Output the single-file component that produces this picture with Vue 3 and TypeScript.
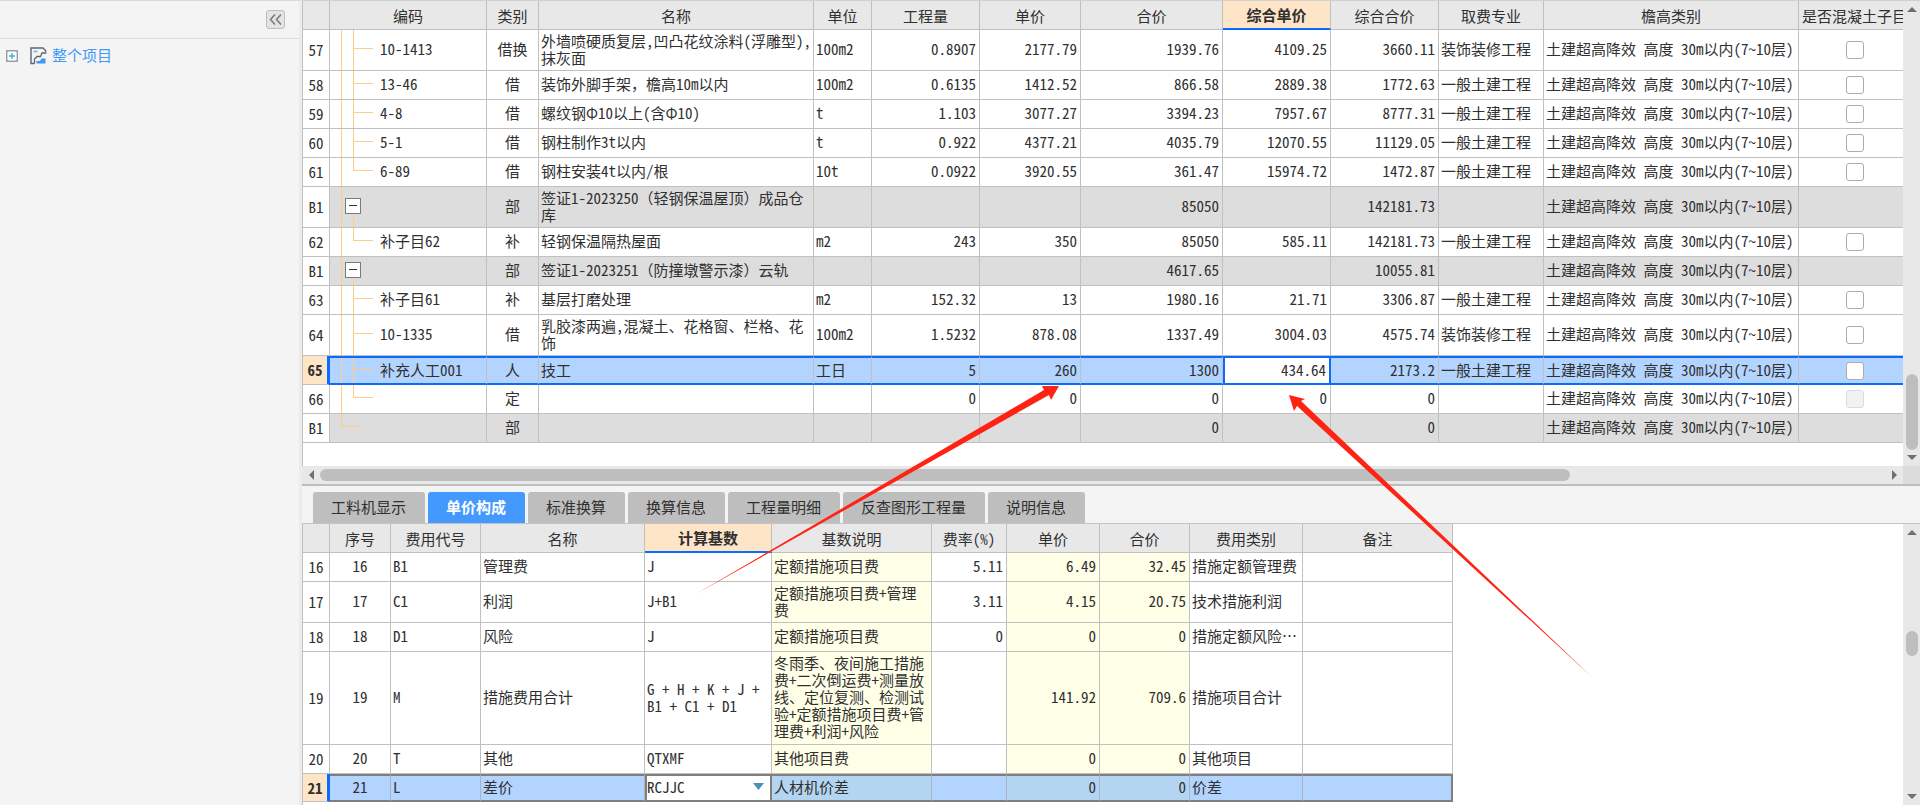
<script setup lang="ts">
interface WorkRow {
  no: string
  code: string
  tree: 'mid' | 'last' | 'open' | 'end'
  kind: string
  name: string
  unit: string
  qty: string
  price: string
  total: string
  fullPrice: string
  fullTotal: string
  trade: string
  check: 'on' | 'off' | 'none'
  group?: boolean
  tall?: boolean
  selected?: boolean
}

interface FeeRow {
  no: string
  code: string
  name: string
  base: string
  note: string
  rate: string
  price: string
  total: string
  kind: string
  size?: 'tall' | 'huge' | 'short'
  selected?: boolean
}

const height = '土建超高降效 高度 30m以内(7~10层)'
const general = '一般土建工程'
const decor = '装饰装修工程'

const workColumns = [
  { w: 27, t: '' },
  { w: 157, t: '编码' },
  { w: 52, t: '类别' },
  { w: 275, t: '名称' },
  { w: 58, t: '单位' },
  { w: 108, t: '工程量' },
  { w: 101, t: '单价' },
  { w: 142, t: '合价' },
  { w: 108, t: '综合单价', active: true },
  { w: 108, t: '综合合价' },
  { w: 105, t: '取费专业' },
  { w: 255, t: '檐高类别' },
  { w: 112, t: '是否混凝土子目' }
]

const workRows: WorkRow[] = [
  { no: '57', code: '10-1413', tree: 'mid', kind: '借换', name: '外墙喷硬质复层,凹凸花纹涂料(浮雕型),\n抹灰面', unit: '100m2', qty: '0.8907', price: '2177.79', total: '1939.76', fullPrice: '4109.25', fullTotal: '3660.11', trade: decor, check: 'on', tall: true },
  { no: '58', code: '13-46', tree: 'mid', kind: '借', name: '装饰外脚手架，檐高10m以内', unit: '100m2', qty: '0.6135', price: '1412.52', total: '866.58', fullPrice: '2889.38', fullTotal: '1772.63', trade: general, check: 'on' },
  { no: '59', code: '4-8', tree: 'mid', kind: '借', name: '螺纹钢Φ10以上(含Φ10)', unit: 't', qty: '1.103', price: '3077.27', total: '3394.23', fullPrice: '7957.67', fullTotal: '8777.31', trade: general, check: 'on' },
  { no: '60', code: '5-1', tree: 'mid', kind: '借', name: '钢柱制作3t以内', unit: 't', qty: '0.922', price: '4377.21', total: '4035.79', fullPrice: '12070.55', fullTotal: '11129.05', trade: general, check: 'on' },
  { no: '61', code: '6-89', tree: 'last', kind: '借', name: '钢柱安装4t以内/根', unit: '10t', qty: '0.0922', price: '3920.55', total: '361.47', fullPrice: '15974.72', fullTotal: '1472.87', trade: general, check: 'on' },
  { no: 'B1', code: '', tree: 'open', kind: '部', name: '签证1-2023250（轻钢保温屋顶）成品仓\n库', unit: '', qty: '', price: '', total: '85050', fullPrice: '', fullTotal: '142181.73', trade: '', check: 'none', group: true, tall: true },
  { no: '62', code: '补子目62', tree: 'last', kind: '补', name: '轻钢保温隔热屋面', unit: 'm2', qty: '243', price: '350', total: '85050', fullPrice: '585.11', fullTotal: '142181.73', trade: general, check: 'on' },
  { no: 'B1', code: '', tree: 'open', kind: '部', name: '签证1-2023251（防撞墩警示漆）云轨', unit: '', qty: '', price: '', total: '4617.65', fullPrice: '', fullTotal: '10055.81', trade: '', check: 'none', group: true },
  { no: '63', code: '补子目61', tree: 'mid', kind: '补', name: '基层打磨处理', unit: 'm2', qty: '152.32', price: '13', total: '1980.16', fullPrice: '21.71', fullTotal: '3306.87', trade: general, check: 'on' },
  { no: '64', code: '10-1335', tree: 'mid', kind: '借', name: '乳胶漆两遍,混凝土、花格窗、栏格、花\n饰', unit: '100m2', qty: '1.5232', price: '878.08', total: '1337.49', fullPrice: '3004.03', fullTotal: '4575.74', trade: decor, check: 'on', tall: true },
  { no: '65', code: '补充人工001', tree: 'mid', kind: '人', name: '技工', unit: '工日', qty: '5', price: '260', total: '1300', fullPrice: '434.64', fullTotal: '2173.2', trade: general, check: 'on', selected: true },
  { no: '66', code: '', tree: 'last', kind: '定', name: '', unit: '', qty: '0', price: '0', total: '0', fullPrice: '0', fullTotal: '0', trade: '', check: 'off' },
  { no: 'B1', code: '', tree: 'end', kind: '部', name: '', unit: '', qty: '', price: '', total: '0', fullPrice: '', fullTotal: '0', trade: '', check: 'none', group: true }
]

const tabs = ['工料机显示', '单价构成', '标准换算', '换算信息', '工程量明细', '反查图形工程量', '说明信息']
const activeTab = '单价构成'

const feeColumns = [
  { w: 27, t: '' },
  { w: 61, t: '序号' },
  { w: 90, t: '费用代号' },
  { w: 164, t: '名称' },
  { w: 127, t: '计算基数', active: true },
  { w: 160, t: '基数说明' },
  { w: 75, t: '费率(%)' },
  { w: 93, t: '单价' },
  { w: 90, t: '合价' },
  { w: 113, t: '费用类别' },
  { w: 150, t: '备注' }
]

const feeRows: FeeRow[] = [
  { no: '16', code: 'B1', name: '管理费', base: 'J', note: '定额措施项目费', rate: '5.11', price: '6.49', total: '32.45', kind: '措施定额管理费' },
  { no: '17', code: 'C1', name: '利润', base: 'J+B1', note: '定额措施项目费+管理\n费', rate: '3.11', price: '4.15', total: '20.75', kind: '技术措施利润', size: 'tall' },
  { no: '18', code: 'D1', name: '风险', base: 'J', note: '定额措施项目费', rate: '0', price: '0', total: '0', kind: '措施定额风险…' },
  { no: '19', code: 'M', name: '措施费用合计', base: 'G + H + K + J +\nB1 + C1 + D1', note: '冬雨季、夜间施工措施\n费+二次倒运费+测量放\n线、定位复测、检测试\n验+定额措施项目费+管\n理费+利润+风险', rate: '', price: '141.92', total: '709.6', kind: '措施项目合计', size: 'huge' },
  { no: '20', code: 'T', name: '其他', base: 'QTXMF', note: '其他项目费', rate: '', price: '0', total: '0', kind: '其他项目' },
  { no: '21', code: 'L', name: '差价', base: 'RCJJC', note: '人材机价差', rate: '', price: '0', total: '0', kind: '价差', size: 'short', selected: true }
]

const sum = (cols: { w: number }[]) => cols.reduce((a, c) => a + c.w, 0)
const workWidth = sum(workColumns) + 'px'
const feeWidth = sum(feeColumns) + 'px'

const scroll = {
  work: [359, 76, 3],
  side: [2, 1251, 318],
  fee: [94, 25, 136]
}
</script>

<template>
  <div class="app">
    <aside class="sidebar">
      <div class="side-head">
        <button class="collapse" aria-label="收起">
          <svg width="13" height="11" viewBox="0 0 13 11"><path d="M6 .5 1.500 5.500 6 10.500M12 .5 7.500 5.500 12 10.500" fill="none" stroke="#7c7c7c" stroke-width="1.600" /></svg>
        </button>
      </div>
      <a class="project" href="#">
        <svg class="plus" width="12" height="12" viewBox="0 0 12 12"><rect x=".75" y=".75" width="10.500" height="10.500" fill="#fff" stroke="#8d9499" stroke-width="1.300" /><path d="M3 6h6M6 3v6" stroke="#3fb3e0" stroke-width="1.400" /></svg>
        <svg class="doc" width="17" height="18" viewBox="0 0 17 18">
          <path d="M4.500 16.500H1V1h12l2.500 2.500V5" fill="none" stroke="#5d6670" stroke-width="1.400" />
          <path d="M3.500 4.500h4" stroke="#6fb3f5" stroke-width="1.600" />
          <path d="M16.500 6H12L10.500 9.500H7L4.500 12v4.500" fill="none" stroke="#5d6670" stroke-width="1.300" />
          <path d="M6.500 16.500v-2.500H10l1.500-2.500h4v5z" fill="#3f97fa" />
        </svg>
        <span>整个项目</span>
      </a>
    </aside>

    <main class="main">
      <section class="pane">
        <div class="pane-row">
          <div class="view work-view">
            <table class="grid" :style="{ width: workWidth }">
              <colgroup><col v-for="(c, i) in workColumns" :key="i" :style="{ width: c.w + 'px' }" /></colgroup>
              <thead>
                <tr><th v-for="(c, i) in workColumns" :key="i" :class="{ active: c.active }">{{ c.t }}</th></tr>
              </thead>
              <tbody>
                <tr v-for="(r, i) in workRows" :key="i" :class="{ group: r.group, tall: r.tall, selected: r.selected }">
                  <th scope="row" class="no">{{ r.no }}</th>
                  <td class="code" :class="r.tree">
                    <button v-if="r.tree === 'open'" class="fold" aria-label="折叠"></button>
                    <template v-else>{{ r.code }}</template>
                  </td>
                  <td class="mid-text">{{ r.kind }}</td>
                  <td class="text">{{ r.name }}</td>
                  <td class="text">{{ r.unit }}</td>
                  <td class="num">{{ r.qty }}</td>
                  <td class="num">{{ r.price }}</td>
                  <td class="num">{{ r.total }}</td>
                  <td class="num" :class="{ current: r.selected }">{{ r.fullPrice }}</td>
                  <td class="num">{{ r.fullTotal }}</td>
                  <td class="text">{{ r.trade }}</td>
                  <td class="text">{{ height }}</td>
                  <td class="tick"><input v-if="r.check !== 'none'" type="checkbox" :disabled="r.check === 'off'" aria-label="是否混凝土子目" /></td>
                </tr>
              </tbody>
            </table>
          </div>
          <div class="vbar">
            <svg width="10" height="5" viewBox="0 0 10 5"><path d="M0 5 5 0l5 5z" fill="#6f6f76" /></svg>
            <div class="track">
              <i :style="{ flexGrow: scroll.work[0] }"></i><b :style="{ flexGrow: scroll.work[1] }"></b><i :style="{ flexGrow: scroll.work[2] }"></i>
            </div>
            <svg width="10" height="5" viewBox="0 0 10 5"><path d="M0 0h10L5 5z" fill="#6f6f76" /></svg>
          </div>
        </div>
        <div class="hbar-row">
          <div class="hbar">
            <svg width="5" height="10" viewBox="0 0 5 10"><path d="M5 0v10L0 5z" fill="#6f6f76" /></svg>
            <div class="track">
              <i :style="{ flexGrow: scroll.side[0] }"></i><b :style="{ flexGrow: scroll.side[1] }"></b><i :style="{ flexGrow: scroll.side[2] }"></i>
            </div>
            <svg width="5" height="10" viewBox="0 0 5 10"><path d="M0 0v10l5-5z" fill="#6f6f76" /></svg>
          </div>
          <div class="corner"></div>
        </div>
      </section>

      <nav class="tabs" role="tablist">
        <button v-for="t in tabs" :key="t" role="tab" class="tab" :class="{ on: t === activeTab }" :aria-selected="t === activeTab">{{ t }}</button>
      </nav>

      <section class="pane-row fee">
        <div class="view">
          <table class="grid" :style="{ width: feeWidth }">
            <colgroup><col v-for="(c, i) in feeColumns" :key="i" :style="{ width: c.w + 'px' }" /></colgroup>
            <thead>
              <tr><th v-for="(c, i) in feeColumns" :key="i" :class="{ active: c.active }">{{ c.t }}</th></tr>
            </thead>
            <tbody>
              <tr v-for="r in feeRows" :key="r.no" :class="[r.size, { selected: r.selected }]">
                <th scope="row" class="no">{{ r.no }}</th>
                <td class="mid-text">{{ r.no }}</td>
                <td class="text">{{ r.code }}</td>
                <td class="text">{{ r.name }}</td>
                <td class="text" :class="{ current: r.selected }">
                  <div v-if="r.selected" class="combo">
                    <select aria-label="计算基数"><option>{{ r.base }}</option></select>
                    <svg width="11" height="7" viewBox="0 0 11 7"><path d="M0 0h11L5.500 7z" fill="#4a90bd" /></svg>
                  </div>
                  <template v-else>{{ r.base }}</template>
                </td>
                <td class="text soft">{{ r.note }}</td>
                <td class="num">{{ r.rate }}</td>
                <td class="num soft">{{ r.price }}</td>
                <td class="num soft">{{ r.total }}</td>
                <td class="text">{{ r.kind }}</td>
                <td></td>
              </tr>
            </tbody>
          </table>
        </div>
        <div class="vbar">
          <svg width="10" height="5" viewBox="0 0 10 5"><path d="M0 5 5 0l5 5z" fill="#6f6f76" /></svg>
          <div class="track">
            <i :style="{ flexGrow: scroll.fee[0] }"></i><b :style="{ flexGrow: scroll.fee[1] }"></b><i :style="{ flexGrow: scroll.fee[2] }"></i>
          </div>
          <svg width="10" height="5" viewBox="0 0 10 5"><path d="M0 0h10L5 5z" fill="#6f6f76" /></svg>
        </div>
      </section>
    </main>

    <svg class="marks" width="1920" height="805" viewBox="0 0 1920 805" aria-hidden="true">
      <path d="M696 594 1044 390l-2-4h17l-8 14-2-5z" fill="#ff2314" />
      <path d="M1593 678 1297 406l-3 5-5-16 16 4-4 2z" fill="#ff2314" />
    </svg>
  </div>
</template>

<style>
body {
  margin: 0;
  background: #f4f4f4;
}
</style>

<style scoped>
.app {
  position: relative;
  display: flex;
  min-height: 100vh;
  overflow: hidden;
  color: #303030;
  font: 15px/17px "Noto Sans Mono CJK SC", "Noto Sans CJK SC", sans-serif;
}
.app * {
  box-sizing: border-box;
}
.sidebar {
  flex: none;
  width: 302px;
  background: #f4f4f4;
  border-top: 1px solid #d8dada;
  border-right: 3px solid #ececec;
}
.side-head {
  display: flex;
  justify-content: flex-end;
  padding: 9px 14px;
  border-bottom: 1px solid #dedede;
}
.collapse {
  display: flex;
  align-items: center;
  justify-content: center;
  width: 19px;
  height: 19px;
  padding: 0;
  background: #e4e4e4;
  border: 1px solid #bdbdbd;
  border-radius: 3px;
}
.project {
  display: flex;
  align-items: center;
  padding: 7px 6px;
  color: #4397f7;
  text-decoration: none;
}
.project span {
  padding-bottom: 2px;
}
.doc {
  margin: 0 5px 0 12px;
}
.main {
  flex: 1;
  min-width: 0;
  display: flex;
  flex-direction: column;
  border-top: 1px solid #d0d0d0;
  background: #fff;
}
.pane-row {
  display: flex;
}
.fee {
  flex: 1;
}
.view {
  flex: 1;
  min-width: 0;
  overflow: hidden;
  border-left: 1px solid #c0c0c0;
}
.work-view {
  padding-bottom: 23px;
}
.grid {
  table-layout: fixed;
  border-collapse: separate;
  border-spacing: 0;
}
.grid th,
.grid td {
  height: 29px;
  padding: 0 0 3px;
  border-right: 1px solid #c0c0c0;
  border-bottom: 1px solid #c0c0c0;
  font-weight: 400;
  white-space: pre;
  overflow: hidden;
}
.grid thead th {
  padding: 0;
  background: #e8e8e8;
  text-align: center;
}
.grid thead th.active {
  background: #ffe5c8;
  border-bottom: 2px solid #0a6cff;
  font-weight: 700;
}
.grid .tall > * {
  height: 41px;
}
.grid .huge > * {
  height: 93px;
}
.grid .short > * {
  height: 28px;
}
.grid .no {
  padding-bottom: 1px;
  background: #fff;
  text-align: center;
}
.grid .text {
  padding-left: 2px;
}
.grid .num {
  padding-right: 3px;
  text-align: right;
}
.mid-text,
.grid .tick {
  text-align: center;
}
.grid .tick {
  padding-bottom: 0;
}
.group td {
  background-color: #ddd;
}
.grid .soft {
  background: #ffffe8;
}
.grid .code {
  padding-left: 50px;
  background-repeat: no-repeat;
  --l: linear-gradient(#ffcd8a, #ffcd8a);
}
.code.mid {
  background-image: var(--l), var(--l), var(--l);
  background-position: 11px 0, 23px 0, 23px 45%;
  background-size: 1px 100%, 1px 100%, 20px 1px;
}
.code.last {
  background-image: var(--l), var(--l), var(--l);
  background-position: 11px 0, 23px 0, 23px 45%;
  background-size: 1px 100%, 1px 45%, 20px 1px;
}
.grid .code.open {
  padding-left: 15px;
  background-image: var(--l), var(--l), var(--l);
  background-position: 11px 0, 23px 100%, 11px 45%;
  background-size: 1px 100%, 1px 50%, 5px 1px;
}
.code.end {
  background-image: var(--l), var(--l);
  background-position: 11px 0, 11px 45%;
  background-size: 1px 45%, 20px 1px;
}
.fold {
  display: flex;
  align-items: center;
  justify-content: center;
  width: 16px;
  height: 16px;
  padding: 0;
  background: #fff;
  border: 1px solid #7a7a7a;
}
.fold::before {
  content: "";
  width: 8px;
  height: 1px;
  background: #333;
}
.tick input {
  appearance: none;
  display: block;
  width: 18px;
  height: 18px;
  margin: 0 auto;
  background: #fff;
  border: 1px solid #ababab;
  border-radius: 3px;
}
.tick input:disabled {
  background: #f2f2f2;
  border-color: #dcdcdc;
}
.grid .selected .no {
  background: #ffe5c8;
  font-weight: 700;
  border-right: 3px solid #0a6cff;
}
.grid .selected td {
  background-color: #b3d4ff;
  border-top: 2px solid #0a6cff;
  border-bottom: 2px solid #0a6cff;
}
.grid .selected td.current {
  background: #fff;
  border-right: 2px solid #0a6cff;
  border-left: 2px solid #0a6cff;
}
.fee .selected td,
.grid .short.selected td.current {
  border-color: #7f7f7f;
}
.fee .grid .selected td {
  border-top-color: #7f7f7f;
  border-bottom-color: #7f7f7f;
}
.fee .grid .selected td:not(.current):not(:last-child) {
  border-right-color: #a9b4c2;
}
.fee .grid .selected td:last-child {
  border-right: 2px solid #7f7f7f;
}
.fee .grid .selected .soft {
  background: #b3d5f1;
}
.fee .grid td.current {
  padding: 0 0 3px;
}
.combo {
  display: flex;
  align-items: center;
  padding-right: 6px;
}
.combo select {
  flex: 1;
  min-width: 0;
  appearance: none;
  padding: 0;
  border: 0;
  background: none;
  color: inherit;
  font: inherit;
}
.vbar {
  flex: none;
  display: flex;
  flex-direction: column;
  align-items: center;
  width: 17px;
  padding: 6px 0;
  background: #e8e8e8;
}
.vbar .track {
  flex: 1;
  display: flex;
  flex-direction: column;
  width: 12px;
  margin: 2px 0;
}
.track i,
.track b {
  flex-basis: 0;
}
.track b {
  background: #bebebe;
  border-radius: 6px;
}
.hbar-row {
  display: flex;
  height: 18px;
  border-left: 1px solid #e8e8e8;
}
.hbar {
  flex: 1;
  display: flex;
  align-items: center;
  padding: 0 6px;
  background: #e8e8e8;
}
.hbar .track {
  flex: 1;
  display: flex;
  height: 12px;
  margin: 0 4px;
}
.corner {
  width: 17px;
  background: #dcdcdc;
}
.tabs {
  display: flex;
  align-items: flex-end;
  gap: 3px;
  height: 40px;
  padding: 0 11px;
  background: #f4f4f4;
  border-top: 2px solid #bebebe;
  border-bottom: 1px solid #c4c4c4;
}
.tab {
  height: 31px;
  padding: 0 19px 2px 18px;
  border: 0;
  border-radius: 3px 3px 0 0;
  background: #bebebe;
  color: #303030;
  font: inherit;
}
.tab.on {
  background: #4499ff;
  color: #fff;
  font-weight: 700;
}
.marks {
  position: absolute;
  top: 0;
  left: 0;
  pointer-events: none;
}
</style>
